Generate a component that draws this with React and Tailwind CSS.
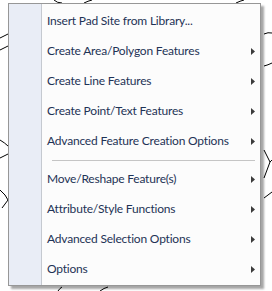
import { Fragment } from "react";

const items = [
  { label: "Insert Pad Site from Library...", sub: false },
  { label: "Create Area/Polygon Features", sub: true },
  { label: "Create Line Features", sub: true },
  { label: "Create Point/Text Features", sub: true },
  { label: "Advanced Feature Creation Options", sub: true, sepAfter: true },
  { label: "Move/Reshape Feature(s)", sub: true },
  { label: "Attribute/Style Functions", sub: true },
  { label: "Advanced Selection Options", sub: true },
  { label: "Options", sub: true },
];

function Arrow() {
  return (
    <svg width="4" height="7" viewBox="0 0 4 7" className="shrink-0">
      <path d="M0 0 L4 3.5 L0 7 Z" fill="#3c3c3c" />
    </svg>
  );
}

// map drawing peeking out from behind the menu
function MapLines() {
  return (
    <svg width="272" height="291" className="absolute inset-0" fill="none" stroke="#000" strokeWidth="1">
      <path d="M54 0 Q57 3 62 3" />
      <path d="M84 3 Q88 1 92 0" />
      <path d="M236 3 Q240 1 244 0" />
      <path d="M0 38 L8 34" />
      <path d="M0 50 L8 46" />
      <path d="M0 140 Q5 143 8 146" />
      <path d="M0 158 L8 154" />
      <path d="M0 190 Q6 195 8 200" />
      <path d="M2 208 L8 200" />
      <path d="M264 34 Q268 32 272 33" />
      <path d="M264 66 Q268 65 272 63" />
      <path d="M264 150 L270 162 L264 178" />
      <path d="M270 162 L272 160" />
      <path d="M264 198 L272 192" />
      <path d="M58 291 Q60 288 62 287" />
      <path d="M100 291 Q104 288 108 287" />
    </svg>
  );
}

export default function App() {
  return (
    <div className="relative w-[272px] h-[291px] bg-white overflow-hidden font-['Lato',sans-serif]">
      <MapLines />
      <div className="absolute left-[8px] top-[3px] w-[253px] h-[283px] border border-[#979797] bg-[#fcfcfc] shadow-[3px_3px_2px_rgba(0,0,0,0.35)] flex">
        {/* icon gutter */}
        <div className="w-[33px] shrink-0 bg-[#e9edf6] border-r border-[#c5c9d0]" />
        <div className="flex-1 flex flex-col pt-[2px] pl-[5px] pr-[5px]">
          {items.map((it) => (
            <Fragment key={it.label}>
              <div className="h-[30px] flex items-center justify-between text-[12px] tracking-[-0.2px] text-[#1e3356] leading-none">
                <span>{it.label}</span>
                {it.sub && <Arrow />}
              </div>
              {it.sepAfter && (
                <div className="h-[8px] flex items-center pl-[5px]">
                  <div className="flex-1 h-px bg-[#c5c5c5]" />
                </div>
              )}
            </Fragment>
          ))}
        </div>
      </div>
    </div>
  );
}
